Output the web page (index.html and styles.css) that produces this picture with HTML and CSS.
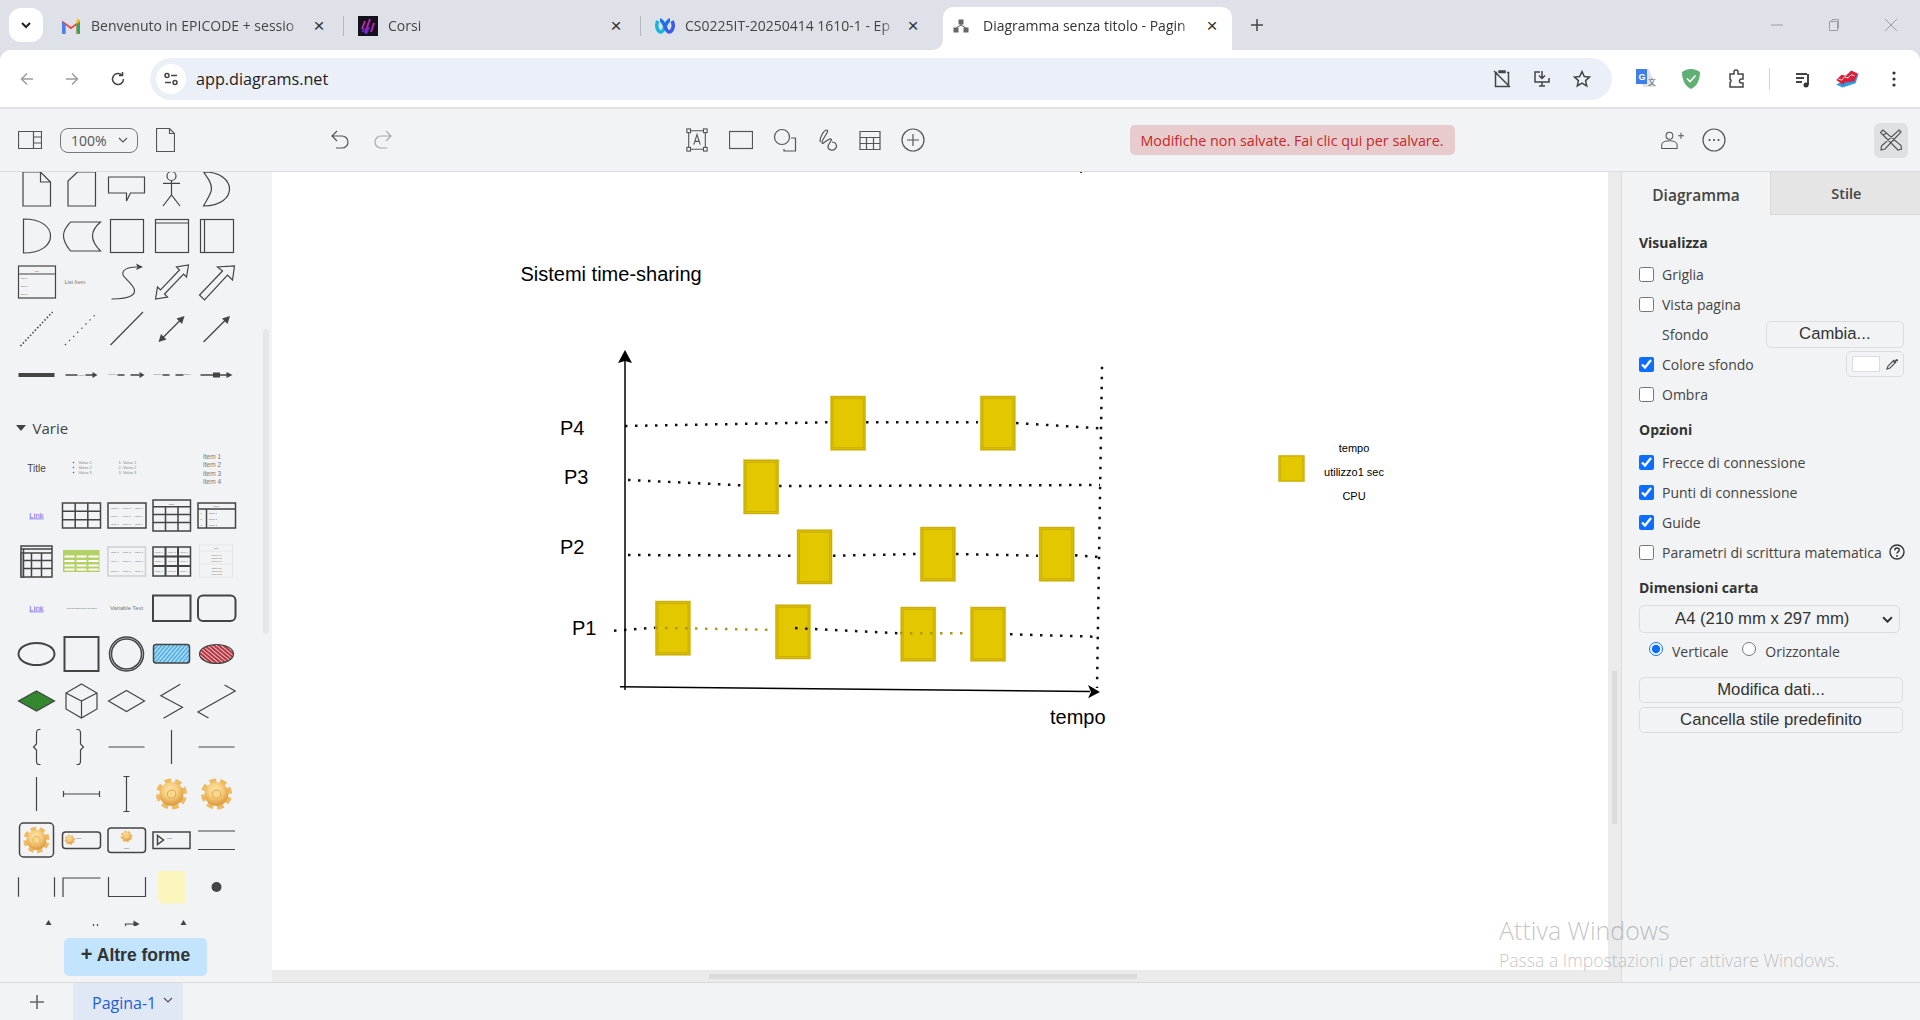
FILE: index.html
```html
<!DOCTYPE html>
<html lang="it">
<head>
<meta charset="utf-8">
<title>Diagramma senza titolo - Pagina-1</title>
<link rel="stylesheet" href="styles.css">
</head>
<body>
<svg class="defs" width="0" height="0">
  <defs>
    <radialGradient id="gearfill" cx="0.38" cy="0.3" r="0.85"><stop offset="0" stop-color="#fde9b4"/><stop offset="0.55" stop-color="#f6cc7a"/><stop offset="1" stop-color="#e0a145"/></radialGradient>
    <pattern id="hatchblue" width="3" height="3" patternUnits="userSpaceOnUse" patternTransform="rotate(40)"><rect width="3" height="3" fill="#54b2e8"/><rect width="1" height="3" fill="#cfeafa"/></pattern>
    <pattern id="hatchred" width="3" height="3" patternUnits="userSpaceOnUse" patternTransform="rotate(-50)"><rect width="3" height="3" fill="#b5343f"/><rect width="1" height="3" fill="#eec3c6"/></pattern>
    <symbol id="gear" viewBox="-16 -16 32 32" overflow="visible">
      <g transform="rotate(14)">
        <circle r="12.800" fill="none" stroke="#eebb62" stroke-width="5.600" stroke-dasharray="6.200 3.850"/>
        <circle r="8.200" fill="none" stroke="url(#gearfill)" stroke-width="7.500"/>
        <circle r="4.200" fill="#f8d98c" stroke="#dfa44c" stroke-width="1"/>
      </g>
    </symbol>
    <symbol id="job" viewBox="0 0 37 56" preserveAspectRatio="none">
      <rect width="37" height="56" fill="#e9df9a"/>
      <rect x="0.800" y="0.800" width="35.400" height="54.400" fill="#c7ab00"/>
      <rect x="1.800" y="1.800" width="33.400" height="52.400" fill="#dcc000"/>
      <rect x="2.800" y="2.800" width="31.400" height="50.400" fill="#c9ae00"/>
      <rect x="3.800" y="3.800" width="29.400" height="48.400" fill="#e3c800"/>
    </symbol>
  </defs>
</svg>

<header class="chrome">
  <div class="tabstrip">
    <button class="tabsearch"><svg viewBox="0 0 12 12" class="i12"><path d="M2 4l4 4 4-4" class="stroke-bold"/></svg></button>
    <div class="tab">
      <svg class="favicon" viewBox="0 0 18 14"><path d="M1 14V2l8 6 8-6v12h-3V6L9 10 4 6v8z" fill="#ea4335"/><path d="M1 14V3l3 2.500V14z" fill="#4285f4"/><path d="M14 14V5.500L17 3v11z" fill="#34a853"/><path d="M14 5.500L17 3V1.500L15 0.500 14 1.500z" fill="#fbbc04"/></svg>
      <span class="tabtitle">Benvenuto in EPICODE + sessio</span>
      <span class="tabclose">×</span>
    </div>
    <div class="tab">
      <svg class="favicon favicon-square" viewBox="0 0 20 20"><rect width="20" height="20" fill="#14121c"/><path d="M7 5L4 13M12 3L7 17M16 7l-3 9" stroke="#c01fb0" stroke-width="2" fill="none"/><path d="M6 12L4.500 16M11 11l-3 7" stroke="#5a2be0" stroke-width="2" fill="none"/></svg>
      <span class="tabtitle">Corsi</span>
      <span class="tabclose">×</span>
    </div>
    <div class="tab tab-nosep">
      <svg class="favicon favicon-square" viewBox="0 0 20 20"><path d="M3 5c-3 5 0 11 3 11 2 0 3-3 4-6" fill="none" stroke="#18b7d9" stroke-width="3.500"/><path d="M17 5c3 5 0 11-3 11-2 0-3-3-4-6" fill="none" stroke="#3c5be8" stroke-width="3.500"/><path d="M5 4c2 0 3 3 5 6 2-3 3-6 5-6" fill="none" stroke="#1f6fe6" stroke-width="3.500"/></svg>
      <span class="tabtitle">CS0225IT-20250414 1610-1 - Ep</span>
      <span class="tabclose">×</span>
    </div>
    <div class="tab tab-active">
      <svg class="favicon favicon-small" viewBox="0 0 16 14"><rect x="5.500" y="0.500" width="5" height="5" fill="#666"/><rect x="0.500" y="8.500" width="5" height="5" fill="#666"/><rect x="10.500" y="8.500" width="5" height="5" fill="#666"/><path d="M8 5v2M8 6L3 9M8 6l5 3" stroke="#666" fill="none"/></svg>
      <span class="tabtitle">Diagramma senza titolo - Pagin</span>
      <span class="tabclose">×</span>
    </div>
    <button class="newtab"><svg viewBox="0 0 14 14" class="i14"><path d="M7 1v12M1 7h12" class="stroke-dark"/></svg></button>
    <div class="winctrls">
      <svg viewBox="0 0 14 14" class="i14"><path d="M1 7h12" class="stroke-win"/></svg>
      <svg viewBox="0 0 14 14" class="i14"><path d="M2.500 3.500h8v9h-8zM5 3.500V1.500h6.500v8.500h-1" class="stroke-win"/></svg>
      <svg viewBox="0 0 14 14" class="i14"><path d="M1 1l12 12M13 1L1 13" class="stroke-win"/></svg>
    </div>
  </div>
  <div class="urlbar">
    <svg class="navicon nav-back" viewBox="0 0 16 16"><path d="M14 8H2.500M8 2.500L2.500 8 8 13.500" class="stroke-dim"/></svg>
    <svg class="navicon nav-fwd" viewBox="0 0 16 16"><path d="M2 8h11.500M8 2.500L13.500 8 8 13.500" class="stroke-dim"/></svg>
    <svg class="navicon nav-reload" viewBox="0 0 16 16"><path d="M13.500 8a5.500 5.500 0 1 1-1.700-4M12.500 1v3.500H9" class="stroke-dark"/></svg>
    <div class="omnibox">
      <span class="tune"><svg viewBox="0 0 16 16" class="i16"><circle cx="4" cy="4.500" r="2" class="stroke-dark"/><path d="M8 4.500h6M2 11.500h6" class="stroke-dark"/><circle cx="12" cy="11.500" r="2" class="stroke-dark"/></svg></span>
      <span class="url">app.diagrams.net</span>
      <span class="omni-icons">
        <svg class="i20" viewBox="0 0 20 20"><path d="M5 3.500H3.500v14h13v-14H15M7 3.500h6V2H7zM2 2l16 16" class="stroke-dark"/></svg>
        <svg class="i20" viewBox="0 0 20 20"><path d="M8 3H3v10h14V9M10 2v7M7 6.500l3 3 3-3M7 17h6M10 13v4" class="stroke-dark"/></svg>
        <svg class="i20" viewBox="0 0 20 20"><path d="M10 2.500l2.300 5 5.200.6-3.900 3.500 1.100 5.300L10 14.200l-4.700 2.700 1.100-5.300-3.900-3.500 5.200-.6z" class="stroke-dark"/></svg>
      </span>
    </div>
    <div class="extensions">
      <svg class="ext ext-a" viewBox="0 0 22 22"><path d="M1 1h13l6 18H8l-1-3H1z" fill="#dfe3e8"/><path d="M1 1h11v15H1z" fill="#3f7fe8"/><text x="3.500" y="12" class="ext-g">G</text><text x="13" y="17" class="ext-t">文</text></svg>
      <svg class="ext ext-b" viewBox="0 0 22 22"><path d="M11 1c4 0 7 1.500 9 3 0 8-3 14-9 17C5 18 2 12 2 4c2-1.500 5-3 9-3z" fill="#5fb072"/><path d="M7 10.500l3 3 5.500-6" stroke="#fff" stroke-width="1.600" fill="none"/></svg>
      <svg class="ext ext-c" viewBox="0 0 20 20"><path d="M3 5h4V3a2 2 0 0 1 4 0v2h5v5h-1.500a2 2 0 0 0 0 4H16v4H3v-4.500a2 2 0 0 0 0-3.500z" class="stroke-dark"/></svg>
      <span class="ext-sep"></span>
      <svg class="ext ext-d" viewBox="0 0 20 20"><path d="M3 5h11M3 9h8M3 13h6" class="stroke-dark stroke-thick"/><path d="M15 5v11" class="stroke-dark stroke-thick"/><circle cx="13" cy="16" r="2.500" fill="#333"/></svg>
      <svg class="ext ext-e" viewBox="0 0 26 18"><path d="M2 14L23 4l-3 9-12 4z" fill="#2a9ce0"/><path d="M2 10l5-5 4 1 5-5 6 3-3 7-8 1-3 2z" fill="#d8213b"/><path d="M4 9l3 1 3-3 3 1 3-3 3 1" stroke="#fff" fill="none" stroke-width="0.800"/></svg>
      <svg class="ext ext-f" viewBox="0 0 6 20"><circle cx="3" cy="4" r="1.600" fill="#333"/><circle cx="3" cy="10" r="1.600" fill="#333"/><circle cx="3" cy="16" r="1.600" fill="#333"/></svg>
    </div>
  </div>
</header>

<nav class="toolbar">
  <div class="tb-view">
    <svg class="ti" viewBox="0 0 24 24"><path d="M.5 3.500h23v17H.5zM15.500 3.500v17M15.500 9h8M15.500 15h8" class="tool"/></svg>
    <div class="zoompill">100%<svg viewBox="0 0 10 6" class="chev"><path d="M1 1l4 4 4-4" class="tool"/></svg></div>
    <svg class="ti ti-page" viewBox="0 0 19 24"><path d="M.5.500h13l5 5v18H.5zM13.500.500v5h5" class="tool"/></svg>
  </div>
  <div class="tb-undo">
    <svg class="ti" viewBox="0 0 24 24"><path d="M9 3L4 8l5 5M4 8h10a5.500 5.500 0 0 1 0 12H8" class="tool"/></svg>
    <svg class="ti ti-off" viewBox="0 0 24 24"><path d="M15 3l5 5-5 5M20 8H10a5.500 5.500 0 0 0 0 12h6" class="tool"/></svg>
  </div>
  <div class="tb-tools">
    <svg class="ti" viewBox="0 0 24 26"><path d="M3 3h18v20H3z" class="tool"/><rect x="1" y="1" width="4" height="4" class="tool-fill"/><rect x="19" y="1" width="4" height="4" class="tool-fill"/><rect x="1" y="21" width="4" height="4" class="tool-fill"/><rect x="19" y="21" width="4" height="4" class="tool-fill"/><path d="M8.500 18L12 7l3.500 11M9.800 14.500h4.400" class="tool"/></svg>
    <svg class="ti" viewBox="0 0 24 24"><rect x="0.500" y="3.500" width="23" height="17" class="tool"/></svg>
    <svg class="ti" viewBox="0 0 24 24"><circle cx="9" cy="9" r="7.500" class="tool"/><path d="M18 10h4.500v13H11v-2" class="tool"/></svg>
    <svg class="ti" viewBox="0 0 24 24"><path d="M4 14C4 8 8 2 11 2c3 1-6 10-5 13 1 2 6-5 9-4 2 1-3 4-3 8 0 3 5 4 7 2 3-3 1-7-3-7" class="tool"/></svg>
    <svg class="ti" viewBox="0 0 24 24"><path d="M2 3.500h20v18H2zM2 9.500h20M2 15.500h20M8.500 9.500v12M15.500 9.500v12" class="tool"/></svg>
    <svg class="ti" viewBox="0 0 24 24"><circle cx="12" cy="12" r="11" class="tool"/><path d="M12 6v12M6 12h12" class="tool"/></svg>
  </div>
  <button class="savebtn">Modifiche non salvate. Fai clic qui per salvare.</button>
  <div class="tb-share">
    <svg class="ti" viewBox="0 0 28 24"><circle cx="11" cy="7" r="4" class="tool"/><path d="M2 22v-4c0-3 4-5 9-5s9 2 9 5v4zM21 7h7M24.500 3.500v7" class="tool"/></svg>
    <svg class="ti" viewBox="0 0 24 24"><circle cx="12" cy="12" r="11" class="tool"/><circle cx="7.500" cy="12" r="1" fill="#444"/><circle cx="12" cy="12" r="1" fill="#444"/><circle cx="16.500" cy="12" r="1" fill="#444"/></svg>
  </div>
  <button class="formatbtn"><svg class="ti" viewBox="0 0 24 24"><path d="M4 2L1.500 4.500 19 22l3.500-1L22 17.500zM7 5L4.500 7.500M20 2l2 2L6 21l-4 1 .5-4z" class="tool"/></svg></button>
</nav>

<main class="workspace">
  <aside class="sidebar">
    <div class="palette">
      <!-- riga 1 -->
      <svg class="sh" viewBox="-22.500 -23 45 46"><path d="M-13.500-17H4L14-7v24h-27.500zM4-17V-7H14"/></svg>
      <svg class="sh" viewBox="-22.500 -23 45 46"><path d="M-4-17H14v34h-27.500V-8z"/></svg>
      <svg class="sh" viewBox="-22.500 -23 45 46"><path d="M-18-12H18V4H4L0 12V4h-18z"/></svg>
      <svg class="sh" viewBox="-22.500 -23 45 46"><circle cy="-13" r="4.500"/><path d="M0-8.500V6M-8.500-5.700H8.500M-8.500 17L0 6l8.500 11"/></svg>
      <svg class="sh" viewBox="-22.500 -23 45 46"><path d="M-13-17C5-17 13-8 13 0c0 8-8 17-26 17C-8 8-5 4-5 0c0-6-3-10-8-17z"/></svg>
      <!-- riga 2 -->
      <svg class="sh" viewBox="-22.500 -23 45 46"><path d="M-13-17C5-17 14-9 14 0S5 17-13 17z"/></svg>
      <svg class="sh" viewBox="-22.500 -23 45 46"><path d="M-11-14H19C12-8 11-4 11 0c0 6 3 10 8 15H-11c-4-5-7-10-7-15 0-6 3-9 7-14z"/></svg>
      <svg class="sh" viewBox="-22.500 -23 45 46"><rect x="-16" y="-16.500" width="33" height="33"/></svg>
      <svg class="sh" viewBox="-22.500 -23 45 46"><rect x="-16" y="-16.500" width="33" height="33"/><path d="M-16-13H17"/></svg>
      <svg class="sh" viewBox="-22.500 -23 45 46"><rect x="-16" y="-16.500" width="33" height="33"/><path d="M-12-16.500v33"/></svg>
      <!-- riga 3 -->
      <svg class="sh" viewBox="-22.500 -23 45 46"><rect x="-18" y="-16" width="37" height="32"/><path d="M-18-8H19"/><text x="0" y="-10.500" class="t2 mid">List</text><text x="-16" y="-3" class="t2">Item 1</text><text x="-16" y="5" class="t2">Item 2</text><text x="-16" y="13" class="t2">Item 3</text></svg>
      <svg class="sh" viewBox="-22.500 -23 45 46"><text x="-17" y="2" class="t5">List Item</text></svg>
      <svg class="sh" viewBox="-22.500 -23 45 46"><path d="M-15 17C5 17 12 12 6 4 0-4-6-6-3-11c3-4 9-4 14-4"/><path d="M16.500-15l-7-3.500 1.500 3.500-1.500 3z" class="solid"/></svg>
      <svg class="sh" viewBox="-22.500 -23 45 46"><path d="M17-17l-2 12-3-3L-7 12l3 3-12 2 2-12 3 3L8-12l-3-3z"/></svg>
      <svg class="sh" viewBox="-22.500 -23 45 46"><path d="M18-16l-2 14-5-5-23 25-5-5L6-11l-5-4z"/></svg>
      <!-- riga 4 -->
      <svg class="sh" viewBox="-22.500 -23 45 46"><path d="M-16 17L16-17" class="dots1"/></svg>
      <svg class="sh" viewBox="-22.500 -23 45 46"><path d="M-16.500 16l31-31" class="dots2"/></svg>
      <svg class="sh" viewBox="-22.500 -23 45 46"><path d="M-16 16l32.500-33"/></svg>
      <svg class="sh" viewBox="-22.500 -23 45 46"><path d="M-11 11L11-11"/><path d="M13-13l-8 2.500 5.500 5.500zM-13 13l8-2.500-5.500-5.500z" class="solid"/></svg>
      <svg class="sh" viewBox="-22.500 -23 45 46"><path d="M-13 13L11-11"/><path d="M13.500-13l-8 2.500 5.500 5.500z" class="solid"/></svg>
      <!-- riga 5 -->
      <svg class="sh" viewBox="-22.500 -23 45 46"><path d="M-18 0H18" class="thick4"/></svg>
      <svg class="sh" viewBox="-22.500 -23 45 46"><path d="M-16 0H-4M4 0H12" class="sw15"/><text x="0" y="1" class="t2 mid">Label</text><path d="M16 0l-5-3v6z" class="solid"/></svg>
      <svg class="sh" viewBox="-22.500 -23 45 46"><path d="M-9 0H-2M4 0H13" class="sw15"/><text x="-18" y="0" class="t2">Source</text><path d="M18 0l-5-3v6z" class="solid"/></svg>
      <svg class="sh" viewBox="-22.500 -23 45 46"><path d="M-9 0H-2M4 0H12" class="sw15"/><text x="-18" y="0" class="t2">Source</text><text x="12" y="0" class="t2">Target</text></svg>
      <svg class="sh" viewBox="-22.500 -23 45 46"><path d="M-16 0H11" class="sw15"/><rect x="-3.500" y="-2.500" width="7" height="5" class="solid"/><path d="M16 0l-6-3v6z" class="solid"/></svg>

      <div class="section-title"><span class="caret"></span>Varie</div>

      <!-- riga 6 -->
      <svg class="sh" viewBox="-22.500 -23 45 46"><text x="0" y="3.500" class="t9 mid">Title</text></svg>
      <svg class="sh" viewBox="-22.500 -23 45 46"><text x="-3" y="-4" class="t4">Value 1</text><text x="-3" y="1" class="t4">Value 2</text><text x="-3" y="6" class="t4">Value 3</text><circle cx="-8" cy="-5.500" r=".7" class="solid"/><circle cx="-8" cy="-.5" r=".7" class="solid"/><circle cx="-8" cy="4.500" r=".7" class="solid"/></svg>
      <svg class="sh" viewBox="-22.500 -23 45 46"><text x="-8" y="-4" class="t4">1. Value 1</text><text x="-8" y="1" class="t4">2. Value 2</text><text x="-8" y="6" class="t4">3. Value 3</text></svg>
      <svg class="sh" viewBox="-22.500 -23 45 46"></svg>
      <svg class="sh" viewBox="-22.500 -23 45 46"><text x="-13.500" y="-9" class="t6">Item 1</text><text x="-13.500" y="-1" class="t6">Item 2</text><text x="-13.500" y="7.500" class="t6">Item 3</text><text x="-13.500" y="16" class="t6">Item 4</text></svg>
      <!-- riga 7 -->
      <svg class="sh" viewBox="-22.500 -23 45 46"><text x="0" y="2.500" class="tlink mid">Link</text></svg>
      <svg class="sh" viewBox="-22.500 -23 45 46"><rect x="-19" y="-12" width="38" height="25" class="sw15"/><path d="M-6.300-12v25M6.300-12v25M-19-3.700H19M-19 4.700H19" class="sw15"/></svg>
      <svg class="sh" viewBox="-22.500 -23 45 46"><rect x="-18.500" y="-12" width="38" height="25" class="sw15"/><text x="-16" y="-6" class="t2">Value 1</text><text x="-4" y="-6" class="t2">Value 2</text><text x="8" y="-6" class="t2">Value 3</text><text x="-16" y="2" class="t2">Value 4</text><text x="-4" y="2" class="t2">Value 5</text><text x="8" y="2" class="t2">Value 6</text><text x="-16" y="10" class="t2">Value 7</text><text x="-4" y="10" class="t2">Value 8</text><text x="8" y="10" class="t2">Value 9</text></svg>
      <svg class="sh" viewBox="-22.500 -23 45 46"><rect x="-18.500" y="-15" width="37.500" height="31" class="sw15"/><path d="M-18.500-8.300H19M-6-8.300V16M6.500-8.300V16M-18.500-.5H19M-18.500 7.500H19" class="sw15"/><text x="0" y="-10.500" class="t2 mid">Table</text></svg>
      <svg class="sh" viewBox="-22.500 -23 45 46"><rect x="-18.500" y="-12" width="37.500" height="25" class="sw15"/><path d="M-18.500-6H19M-10-6v19" class="sw15"/><text x="0" y="-8" class="t2 mid">Table</text><text x="-16" y="-1" class="t2">1</text><text x="-8" y="-1" class="t2">Value 1</text><text x="-16" y="5" class="t2">2</text><text x="-8" y="5" class="t2">Value 2</text><text x="-16" y="11" class="t2">3</text><text x="-8" y="11" class="t2">Value 3</text></svg>
      <!-- riga 8 -->
      <svg class="sh" viewBox="-22.500 -23 45 46"><rect x="-15.500" y="-15" width="31" height="31" class="sw15"/><path d="M-15.500-12H15.500M-15.500-8H15.500M-13-12V16M-5-8V16M5-8V16M-13-.5H15.500M-13 7.500H15.500" class="sw15"/><rect x="-15.500" y="-8" width="2.500" height="24" class="grayfill"/></svg>
      <svg class="sh" viewBox="-22.500 -23 45 46"><rect x="-18.500" y="-11" width="36.500" height="22" class="greenfill"/><path d="M-17-4.500h10M-5-4.500H5M7-4.500h10M-17 0h10M-5 0H5M7 0h10M-17 4.500h10M-5 4.500H5M7 4.500h10M-17 8.500h10M-5 8.500H5M7 8.500h10" class="whitebars"/></svg>
      <svg class="sh" viewBox="-22.500 -23 45 46"><rect x="-18.500" y="-14" width="37.500" height="29" class="graybox"/><text x="-16" y="-8" class="t2">Value 1</text><text x="-4" y="-8" class="t2">Value 2</text><text x="8" y="-8" class="t2">Value 3</text><text x="-16" y="1" class="t2">Value 4</text><text x="-4" y="1" class="t2">Value 5</text><text x="8" y="1" class="t2">Value 6</text><text x="-16" y="11" class="t2">Value 7</text><text x="-4" y="11" class="t2">Value 8</text><text x="8" y="11" class="t2">Value 9</text></svg>
      <svg class="sh" viewBox="-22.500 -23 45 46"><rect x="-18.500" y="-14" width="37.500" height="29" class="sw15"/><path d="M-6-14V15M6.500-14V15M-18.500-4.500H19M-18.500 5H19" class="sw2"/><text x="-17" y="-8" class="t2">Value 1</text><text x="-4" y="-8" class="t2">Value 2</text><text x="8" y="-8" class="t2">Value 3</text><text x="-17" y="1" class="t2">Value 4</text><text x="-4" y="1" class="t2">Value 5</text><text x="8" y="1" class="t2">Value 6</text><text x="-17" y="11" class="t2">Value 7</text><text x="-4" y="11" class="t2">Value 8</text><text x="8" y="11" class="t2">Value 9</text></svg>
      <svg class="sh" viewBox="-22.500 -23 45 46"><rect x="-17" y="-16" width="33" height="32" class="palebox"/><path d="M-17-10h33M-17 3h33" class="palebox"/><text x="0" y="-12" class="t2 mid">Title</text><text x="0" y="-5" class="t2 mid">Value 1.1</text><text x="0" y="-2" class="t2 mid">Value 1.2</text><text x="0" y="1" class="t2 mid">Value 1.3</text><text x="0" y="8" class="t2 mid">Value 2.1</text><text x="0" y="11" class="t2 mid">Value 2.2</text><text x="0" y="14" class="t2 mid">Value 2.3</text></svg>
      <!-- riga 9 -->
      <svg class="sh" viewBox="-22.500 -23 45 46"><text x="0" y="2.500" class="tlink mid">Link</text></svg>
      <svg class="sh" viewBox="-22.500 -23 45 46"><text x="0" y="1" class="t2 mid">Lorem ipsum dolor sit amet</text></svg>
      <svg class="sh" viewBox="-22.500 -23 45 46"><text x="0" y="2" class="t65 mid">Variable Text</text></svg>
      <svg class="sh" viewBox="-22.500 -23 45 46"><rect x="-18.500" y="-12.500" width="37.500" height="25.500" class="sw2"/></svg>
      <svg class="sh" viewBox="-22.500 -23 45 46"><rect x="-18.500" y="-12.500" width="37.500" height="25.500" rx="5" class="sw2"/></svg>
      <!-- riga 10 -->
      <svg class="sh" viewBox="-22.500 -23 45 46"><ellipse rx="18" ry="11" class="sw2"/></svg>
      <svg class="sh" viewBox="-22.500 -23 45 46"><rect x="-17" y="-17" width="34" height="34" class="sw2"/></svg>
      <svg class="sh" viewBox="-22.500 -23 45 46"><circle r="17" class="sw15"/><circle r="15" class="sw15"/></svg>
      <svg class="sh" viewBox="-22.500 -23 45 46"><rect x="-18" y="-9.500" width="36" height="18.500" rx="2.500" class="hatchb"/></svg>
      <svg class="sh" viewBox="-22.500 -23 45 46"><ellipse rx="17" ry="9.500" class="hatchr"/></svg>
      <!-- riga 11 -->
      <svg class="sh" viewBox="-22.500 -23 45 46"><path d="M0-10L18 0 0 10-18 0z" class="grassfill"/></svg>
      <svg class="sh" viewBox="-22.500 -23 45 46"><path d="M0-17l15.500 9v16L0 17l-15.500-9V-8zM-15.500-8L0 0 15.500-8M0 0V17"/></svg>
      <svg class="sh" viewBox="-22.500 -23 45 46"><path d="M0-10.500L18 0 0 10.500-18 0z"/></svg>
      <svg class="sh" viewBox="-22.500 -23 45 46"><path d="M8.700-16.700L-10.600-5.300 11 6.300-8 17.300"/></svg>
      <svg class="sh" viewBox="-22.500 -23 45 46"><path d="M8-16l10.700 6-37.300 21L-8 17"/></svg>
      <!-- riga 12 -->
      <svg class="sh" viewBox="-22.500 -23 45 46"><path d="M4-17.500H2.500C1-17.500 0-16 0-14v11l-3 3 3 3v11c0 2 1 3.500 2.500 3.500H4"/></svg>
      <svg class="sh" viewBox="-22.500 -23 45 46"><path d="M-5-17.500h1.500C-2-17.500-1-16-1-14v11L2 0l-3 3v11c0 2-1 3.500-2.500 3.500H-5"/></svg>
      <svg class="sh" viewBox="-22.500 -23 45 46"><path d="M-18 0H18"/></svg>
      <svg class="sh" viewBox="-22.500 -23 45 46"><path d="M0-17V17"/></svg>
      <svg class="sh" viewBox="-22.500 -23 45 46"><path d="M-18 0H18"/></svg>
      <!-- riga 13 -->
      <svg class="sh" viewBox="-22.500 -23 45 46"><path d="M0-17V17"/></svg>
      <svg class="sh" viewBox="-22.500 -23 45 46"><path d="M-18 0H18M-18-3V3M18-3V3"/></svg>
      <svg class="sh" viewBox="-22.500 -23 45 46"><path d="M0-17.500V17.500M-3-17.500H3M-3 17.500H3"/></svg>
      <svg class="sh" viewBox="-22.500 -23 45 46"><use href="#gear" x="-16" y="-16" width="32" height="32"/></svg>
      <svg class="sh" viewBox="-22.500 -23 45 46"><use href="#gear" x="-16" y="-16" width="32" height="32"/></svg>
      <!-- riga 14 -->
      <svg class="sh" viewBox="-22.500 -23 45 46"><rect x="-17" y="-17" width="34" height="34" rx="4" class="sw15"/><use href="#gear" x="-13.500" y="-13.500" width="27" height="27"/></svg>
      <svg class="sh" viewBox="-22.500 -23 45 46"><rect x="-19" y="-8" width="38" height="16.500" rx="3" class="sw15"/><use href="#gear" x="-17" y="-5.500" width="10.500" height="10.500"/><text x="-6" y="-1" class="t2">Label</text></svg>
      <svg class="sh" viewBox="-22.500 -23 45 46"><rect x="-18.500" y="-12" width="37.500" height="24.500" rx="3" class="sw15"/><use href="#gear" x="-6" y="-9.500" width="12" height="12"/><text x="0" y="9" class="t2 mid">Label</text></svg>
      <svg class="sh" viewBox="-22.500 -23 45 46"><rect x="-18.500" y="-8" width="37" height="16.500" class="sw15"/><path d="M-14-4.500v9l6-4.500z" class="sw15"/><text x="-5" y="-1" class="t2">Label</text></svg>
      <svg class="sh" viewBox="-22.500 -23 45 46"><path d="M-18.500-9H18.500M-18.500 9.500H18.500"/></svg>
      <!-- riga 15 -->
      <svg class="sh" viewBox="-22.500 -23 45 46"><path d="M-18-9.700V9.700M18-9.700V9.700"/></svg>
      <svg class="sh" viewBox="-22.500 -23 45 46"><path d="M-18.500 10V-9H19"/></svg>
      <svg class="sh" viewBox="-22.500 -23 45 46"><path d="M-18-10V9.500H19V-10"/></svg>
      <svg class="sh" viewBox="-22.500 -23 45 46"><path d="M-14-16H14V16.500H-10L-14 12z" class="sticky"/></svg>
      <svg class="sh" viewBox="-22.500 -23 45 46"><circle r="5" class="solid"/></svg>
      <!-- riga 16 (tagliata) -->
      <svg class="sh" viewBox="-22.500 -23 45 46"><path d="M12-13l3 5h-6z" class="solid"/></svg>
      <svg class="sh" viewBox="-22.500 -23 45 46"><path d="M12-9v2M16-9v2"/></svg>
      <svg class="sh" viewBox="-22.500 -23 45 46"><path d="M-1-4v-5H8"/><path d="M13-9l-6-3.500v7z" class="solid"/></svg>
      <svg class="sh" viewBox="-22.500 -23 45 46"><path d="M12-13l3 5h-6z" class="solid"/></svg>
    </div>
    <span class="side-thumb"></span>
    <button class="moreshapes"><span class="plus">+</span> Altre forme</button>
  </aside>

  <section class="canvas">
    <svg class="diagram" viewBox="272 172 1336 797" width="1336" height="797">
      <path class="tick" d="M1081 172v1"/>
      <text x="520.500" y="281" class="d20">Sistemi time-sharing</text>
      <text x="560" y="435" class="d20">P4</text>
      <text x="564" y="484" class="d20">P3</text>
      <text x="560" y="554" class="d20">P2</text>
      <text x="572" y="635" class="d20">P1</text>
      <text x="1050" y="724" class="d20">tempo</text>

      <path class="dotted" d="M1102 366.700L1097 688"/>
      <path class="dotted" d="M625 426L828 422.300M866 422.300L978 422.300M1016 423L1100 428.300"/>
      <path class="dotted" d="M628 480L741 485.300M779 486L1100 485"/>
      <path class="dotted" d="M628 555L795 555.700M833 555.700L918 554M956 554L1038 555.700M1075 555.300L1100 557"/>
      <path class="dotted" d="M614 630.700L655 627.700M795 628L900 633.300M1010 634.300L1095 636.700"/>

      <use href="#job" x="829.800" y="395.300" width="36.500" height="55.700"/>
      <use href="#job" x="979.600" y="395.300" width="36.500" height="55.700"/>
      <use href="#job" x="742.900" y="459" width="36.500" height="55.700"/>
      <use href="#job" x="796.300" y="529" width="36.500" height="55.700"/>
      <use href="#job" x="919.600" y="526.300" width="36.500" height="55.700"/>
      <use href="#job" x="1038.400" y="526.300" width="36.500" height="55.700"/>
      <use href="#job" x="654.700" y="600.300" width="36.500" height="55.700"/>
      <use href="#job" x="774.700" y="604" width="36.500" height="55.700"/>
      <use href="#job" x="900" y="606.300" width="36.500" height="55.700"/>
      <use href="#job" x="969.800" y="606.300" width="36.500" height="55.700"/>

      <path class="dotted-gold" d="M655 627.700L775 630M900 633.300L970 633.300"/>
      <path class="dotted" d="M795 628L811 629"/>

      <path class="axis" d="M625 361V690"/>
      <path class="axis-head" d="M625 350L632 363 625 361 618 363z"/>
      <path class="axis" d="M620 686.700L1090 691.500"/>
      <path class="axis-head" d="M1100 692L1088 698.300 1091 692 1088 685z"/>

      <use href="#job" x="1278" y="455" width="27" height="27"/>
      <text x="1354" y="452" class="d11">tempo</text>
      <text x="1354" y="476" class="d11">utilizzo1 sec</text>
      <text x="1354" y="500" class="d11">CPU</text>
    </svg>
    <span class="vbar"><span class="vthumb"></span></span>
    <span class="hbar"><span class="hthumb"></span></span>
  </section>

  <aside class="panel">
    <div class="paneltabs">
      <div class="ptab ptab-on">Diagramma</div>
      <div class="ptab">Stile</div>
    </div>
    <div class="panelbody">
      <h3 class="ph ph-first">Visualizza</h3>
      <label class="row"><input type="checkbox">Griglia</label>
      <label class="row"><input type="checkbox">Vista pagina</label>
      <div class="row row-sfondo"><span>Sfondo</span><button class="btn btn-cambia">Cambia...</button></div>
      <div class="row row-color"><label class="lbl"><input type="checkbox" checked>Colore sfondo</label>
        <span class="colorbox"><span class="swatch"></span><svg viewBox="0 0 14 14" class="i14"><path d="M2 12l1-3 5-5 2 2-5 5zM8 3l3 3M9.500 4.500l2-2a1 1 0 0 1 1 1z" class="tool"/></svg></span>
      </div>
      <label class="row"><input type="checkbox">Ombra</label>
      <h3 class="ph ph-opt">Opzioni</h3>
      <label class="row"><input type="checkbox" checked>Frecce di connessione</label>
      <label class="row"><input type="checkbox" checked>Punti di connessione</label>
      <label class="row"><input type="checkbox" checked>Guide</label>
      <label class="row"><input type="checkbox">Parametri di scrittura matematica<svg viewBox="0 0 16 16" class="help"><circle cx="8" cy="8" r="7" class="tool-dark"/><path d="M5.800 6.200C5.800 4.800 6.800 4 8 4s2.300.8 2.300 2.100c0 1.800-2.300 1.800-2.300 3.500" class="tool-dark"/><circle cx="8" cy="12" r=".9" fill="#333"/></svg></label>
      <h3 class="ph ph-dim">Dimensioni carta</h3>
      <div class="select">A4 (210 mm x 297 mm)<svg viewBox="0 0 10 6" class="selchev"><path d="M1 1l4 4 4-4" class="tool-bold"/></svg></div>
      <div class="radios">
        <label class="rlbl"><input type="radio" name="o" checked>Verticale</label>
        <label class="rlbl"><input type="radio" name="o">Orizzontale</label>
      </div>
      <button class="btn btn-wide btn-edit">Modifica dati...</button>
      <button class="btn btn-wide">Cancella stile predefinito</button>
    </div>
  </aside>
</main>

<footer class="pagebar">
  <svg viewBox="0 0 14 14" class="addpage"><path d="M7 0v14M0 7h14" class="tool-soft"/></svg>
  <div class="pagetab">Pagina-1<svg viewBox="0 0 10 6" class="pagechev"><path d="M1 1l4 4 4-4" class="tool"/></svg></div>
</footer>

<div class="watermark">
  <div class="wm1">Attiva Windows</div>
  <div class="wm2">Passa a Impostazioni per attivare Windows.</div>
</div>
</body>
</html>
```

FILE: styles.css
```css
* { box-sizing: border-box; }
html, body { margin: 0; padding: 0; }
body {
  width: 1920px; height: 1020px; overflow: hidden; position: relative;
  display: flex; flex-direction: column;
  font-family: "Open Sans", "Noto Sans", sans-serif; color: #333; background: #f1f3f5;
}
button { font: inherit; color: inherit; border: 0; background: none; padding: 0; }
svg { display: block; }
.defs { position: absolute; }
.i12 { width: 12px; height: 12px; } .i14 { width: 14px; height: 14px; } .i16 { width: 16px; height: 16px; } .i20 { width: 20px; height: 20px; }
.stroke-bold { fill: none; stroke: #222; stroke-width: 2; }
.stroke-dark { fill: none; stroke: #444; stroke-width: 1.5; }
.stroke-thick { stroke-width: 2; }
.stroke-dim { fill: none; stroke: #9a9ea3; stroke-width: 1.5; }
.stroke-win { fill: none; stroke: #9b9ea4; stroke-width: 1; }
.tool { fill: none; stroke: #555; stroke-width: 1.2; }
.tool-fill { fill: #f1f3f5; stroke: #555; stroke-width: 1.2; }
.tool-dark { fill: none; stroke: #333; stroke-width: 1.4; }
.tool-bold { fill: none; stroke: #333; stroke-width: 1.8; }
.tool-soft { fill: none; stroke: #666; stroke-width: 1.6; }

/* browser */
.chrome { background: #dee1e8; flex: none; }
.tabstrip { height: 50px; display: flex; align-items: center; position: relative; padding-left: 9px; }
.tabsearch { width: 34px; height: 34px; background: #fff; border-radius: 12px; display: flex; align-items: center; justify-content: center; margin-right: 4px; }
.tab { width: 297px; height: 43px; align-self: flex-end; display: flex; align-items: center; padding: 0 18px 6px 14px; position: relative; font-size: 14px; color: #444; }
.tab::after { content: ""; position: absolute; right: 0; top: 9px; width: 1px; height: 20px; background: #b4b7bc; }
.tab-nosep::after, .tab-active::after { display: none; }
.favicon { width: 20px; height: 16px; flex: none; margin-right: 10px; }
.favicon-square { height: 20px; }
.favicon-small { width: 16px; height: 14px; margin-right: 14px; }
.tabtitle { flex: 1; min-width: 0; overflow: hidden; white-space: nowrap; -webkit-mask-image: linear-gradient(90deg, #000 92%, transparent 100%); mask-image: linear-gradient(90deg, #000 92%, transparent 100%); }
.tabclose { width: 14px; flex: none; margin-left: 8px; font-size: 19px; line-height: 14px; text-align: center; color: #333; font-family: "Liberation Sans", sans-serif; }
.tab-active { background: #fff; border-radius: 10px 10px 0 0; width: 289px; margin-left: 5px; padding-left: 10px; padding-right: 13px; color: #333; margin-right: 3px; }
.tab-active::before { content: ""; position: absolute; left: -10px; bottom: 0; width: 10px; height: 10px; background: radial-gradient(circle at 0 0, transparent 9.500px, #fff 10px); }
.newtab { width: 14px; height: 14px; margin-left: 15px; }
.winctrls { margin-left: auto; width: 150px; padding-right: 22px; display: flex; justify-content: space-between; }
.urlbar { height: 59px; background: #fff; border-radius: 11px 11px 0 0; border-bottom: 2px solid #dfe1e0; display: flex; align-items: center; position: relative; padding: 1px 0 0 19px; }
.navicon { width: 16px; height: 16px; flex: none; }
.nav-fwd { margin-left: 29px; }
.nav-reload { margin-left: 30px; }
.omnibox { margin-left: 24px; width: 1462px; height: 42px; border-radius: 21px; background: #ebeff8; display: flex; align-items: center; padding: 0 20px 0 6px; }
.tune { width: 30px; height: 30px; border-radius: 50%; background: #fff; display: flex; align-items: center; justify-content: center; }
.url { margin-left: 10px; font-size: 16.200px; color: #222; }
.omni-icons { margin-left: auto; display: flex; gap: 20px; }
.extensions { display: flex; align-items: center; margin-left: 23px; }
.ext { flex: none; width: 22px; height: 22px; }
.ext-b { margin-left: 23px; } .ext-c { margin-left: 25px; width: 20px; height: 20px; }
.ext-sep { width: 1px; height: 22px; background: #c5d4ee; margin-left: 22px; }
.ext-d { margin-left: 23px; width: 20px; height: 20px; }
.ext-e { margin-left: 21px; width: 28px; height: 20px; }
.ext-f { margin-left: 29px; width: 6px; height: 20px; }
.ext-g { font: bold 9px "Liberation Sans", sans-serif; fill: #fff; }
.ext-t { font: 8px "Noto Sans CJK SC", sans-serif; fill: #666; }

/* toolbar */
.toolbar { height: 63px; flex: none; background: #f1f3f5; border-bottom: 1px solid #dadcde; display: flex; align-items: center; position: relative; padding-left: 18px; }
.ti { width: 24px; height: 24px; flex: none; }
.ti-page { width: 19px; }
.ti-off { opacity: .45; }
.tb-view { display: flex; align-items: center; gap: 18px; width: 157px; }
.zoompill { width: 78px; height: 25px; border: 1px solid #777; border-radius: 8px; display: flex; align-items: center; justify-content: space-between; padding: 0 9px 0 10px; font-size: 14px; color: #555; }
.chev { width: 10px; height: 6px; }
.tb-undo { margin-left: 153px; display: flex; gap: 19px; }
.tb-tools { margin-left: 279px; display: grid; grid-template-columns: 45px 44.500px 43px 42px 42.500px 43px; justify-items: center; }
.savebtn { margin-left: 195.500px; width: 325px; height: 30px; background: #e8cccd; border-radius: 5px; color: #c4282c; font-size: 14.300px; }
.tb-share { margin-left: 205px; display: flex; gap: 18px; }
.formatbtn { margin-left: 148px; width: 34px; height: 35px; background: #dfe0e1; border-radius: 6px; display: flex; align-items: center; justify-content: center; }

/* main */
.workspace { height: 810px; flex: none; display: flex; }
.sidebar { width: 272px; flex: none; position: relative; background: #f1f3f5; overflow: hidden; }
.palette { height: 760px; overflow: hidden; display: grid; grid-template-columns: repeat(5, 45px); grid-auto-rows: 46.500px; margin: -6px 0 0 13.500px; width: 225px; position: relative; align-content: start; }
.sh { width: 45px; height: 46px; overflow: visible; fill: none; stroke: #444; stroke-width: 1.2; }
.sh text { stroke: none; fill: #888; font-family: "Liberation Sans", sans-serif; }
.solid { fill: #444; stroke: none; }
.mid { text-anchor: middle; }
.sh .t2 { font-size: 2.500px; fill: #666; }
.sh .t4 { font-size: 4px; fill: #888; }
.sh .t5 { font-size: 5.500px; fill: #777; }
.sh .t65 { font-size: 5.800px; fill: #777; }
.sh .t6 { font-size: 6.500px; fill: #777; }
.sh .t9 { font-size: 10px; fill: #444; }
.sh .tlink { font-size: 7.800px; fill: #6a6af0; text-decoration: underline; }
.dots1 { stroke-width: 1.6; stroke-dasharray: 1.5 2; }
.dots2 { stroke-width: 1.3; stroke-dasharray: 1.3 4.500; }
.thick4 { stroke-width: 4; }
.sw15 { stroke-width: 1.5; }
.sw2 { stroke-width: 2; }
.grayfill { fill: #999; stroke-width: 1; }
.greenfill { fill: #b3d166; stroke: none; }
.whitebars { stroke: #fff; stroke-width: 2.200; }
.graybox { stroke: #cfcfcf; stroke-width: 1.5; }
.palebox { stroke: #e6e6e6; stroke-width: 1; }
.hatchb { fill: url(#hatchblue); stroke-width: 1.5; }
.hatchr { fill: url(#hatchred); stroke-width: 1.2; }
.grassfill { fill: #33872f; }
.sticky { fill: #fcf5bd; stroke: none; }
.section-title { grid-column: 1 / -1; display: flex; align-items: flex-end; font-size: 15px; color: #444; padding-bottom: 7px; margin-left: -13.500px; padding-left: 32.500px; position: relative; height: 46.500px; }
.caret { position: absolute; left: 15.500px; bottom: 14px; border: 5px solid transparent; border-top: 6px solid #444; border-bottom: 0; }
.side-thumb { position: absolute; left: 263px; top: 157px; width: 6px; height: 305px; background: #e6e7e9; border-radius: 3px; }
.moreshapes { position: absolute; left: 64px; bottom: 6px; width: 143px; height: 38px; padding-bottom: 4px; background: #c2e4fd; border-radius: 5px; font: bold 17.500px "Liberation Sans", sans-serif; color: #333; }
.plus { font-size: 20px; line-height: 1; }

.canvas { width: 1349px; flex: none; position: relative; background: #fff; overflow: hidden; }
.diagram { position: absolute; left: 0; top: 0; }
.tick { stroke: #333; stroke-width: 2; }
.d20 { font: 20px "Liberation Sans", sans-serif; fill: #000; }
.d11 { font: 11px "Liberation Sans", sans-serif; fill: #000; text-anchor: middle; }
.dotted { fill: none; stroke: #111; stroke-width: 2.500; stroke-dasharray: 2.500 7.500; }
.dotted-gold { fill: none; stroke: #b29810; stroke-width: 2.500; stroke-dasharray: 2.500 7.500; }
.axis { fill: none; stroke: #000; stroke-width: 1.500; }
.axis-head { fill: #000; }
.vbar { position: absolute; right: 0; top: 0; width: 13px; height: 810px; background: #ebebeb; }
.vthumb { position: absolute; left: 4px; top: 499px; width: 5px; height: 153px; background: #dcdcdc; }
.hbar { position: absolute; left: 0; bottom: 0; width: 1336px; height: 12px; background: #ebebeb; }
.hthumb { position: absolute; left: 437px; top: 4px; width: 428px; height: 5px; background: #dcdcdc; }

/* pannello */
.panel { flex: 1; background: #f1f3f5; border-left: 1px solid #dcdcdc; font-size: 14px; color: #444; }
.paneltabs { display: flex; height: 43px; font-weight: 600; font-size: 14.500px; }
.ptab { display: flex; align-items: center; justify-content: center; flex: 1; background: #e5e5e5; border-bottom: 1px solid #d8d8d8; }
.ptab-on { width: 149px; flex: none; background: #f1f3f5; border-bottom: 0; border-right: 1px solid #d8d8d8; padding-top: 2px; font-size: 15.500px; }
.panelbody { padding: 18px 17px 0 17px; }
.ph { margin: 0; height: 20px; line-height: 20px; font-size: 14px; font-weight: 700; color: #333; }
.ph-first { margin-bottom: 6px; }
.ph-opt { margin-top: 11px; margin-bottom: 7px; }
.ph-dim { margin-top: 11px; margin-bottom: 7px; }
.row { height: 30px; display: flex; align-items: center; white-space: nowrap; }
.row input, .lbl input { appearance: auto; accent-color: #0d6efd; width: 15px; height: 15px; margin: 0 8px 0 0; flex: none; }
.lbl { display: flex; align-items: center; }
.row-sfondo { padding-left: 23px; justify-content: space-between; }
.row-color { justify-content: space-between; }
.btn { border: 1px solid #dcdcdc; border-radius: 5px; background: #f1f3f5; font: 16.700px "Liberation Sans", sans-serif; color: #333; text-align: center; }
.btn-cambia { width: 138px; height: 27px; margin-right: 1px; line-height: 22px; }
.colorbox { width: 58px; height: 26px; border: 1px solid #dcdcdc; border-radius: 5px; display: flex; align-items: center; padding-left: 5px; gap: 5px; margin-right: 1px; }
.swatch { width: 28px; height: 16px; background: #fff; border: 1px solid #dcdcdc; }
.help { width: 16px; height: 16px; margin-left: 7px; }
.select { width: 261px; height: 28px; border: 1px solid #dcdcdc; border-radius: 5px; font: 16.700px "Liberation Sans", sans-serif; color: #333; display: flex; align-items: center; justify-content: space-between; padding: 0 6px 0 35px; }
.selchev { width: 11px; height: 7px; }
.radios { height: 28px; margin: 4px 0 0 10px; display: flex; gap: 14px; align-items: center; font-size: 14px; }
.rlbl { display: flex; align-items: center; }
.rlbl input { accent-color: #0d6efd; width: 14px; height: 14px; margin: -4px 9px 0 0; }
.btn-wide { display: block; width: 264px; height: 26px; line-height: 22px; margin-top: 4px; }
.btn-edit { margin-top: 12px; }

/* fondo */
.pagebar { height: 39px; flex: none; background: #f1f3f5; border-top: 1px solid #d9d9d9; display: flex; position: relative; }
.addpage { width: 14px; height: 14px; margin: 12px 0 0 30px; }
.pagetab { margin-left: 29px; width: 110px; background: #e1e8f5; color: #1a5fd6; font-size: 16px; display: flex; align-items: center; padding: 2px 0 0 19px; position: relative; }
.pagechev { width: 10px; height: 6px; margin: -6px 0 0 7px; }

.watermark { position: absolute; left: 1499px; top: 913px; pointer-events: none; color: rgba(110, 110, 110, .42); font-family: "Open Sans", sans-serif; white-space: nowrap; }
.wm1 { font-size: 25px; line-height: 34px; font-weight: 300; }
.wm2 { font-size: 17.600px; line-height: 24px; font-weight: 300; margin-top: 1px; }
```
